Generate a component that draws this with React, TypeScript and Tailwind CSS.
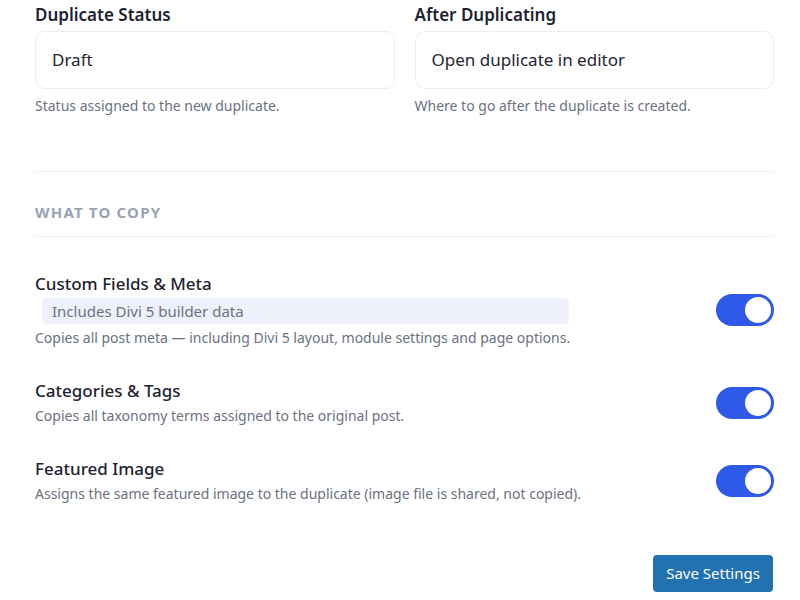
import React, { useState } from 'react';

const font = { fontFamily: '"Noto Sans", "Open Sans", sans-serif' };

type Option = {
  key: string;
  title: string;
  badge?: string;
  help: string;
};

const OPTIONS: Option[] = [
  {
    key: 'meta',
    title: 'Custom Fields & Meta',
    badge: 'Includes Divi 5 builder data',
    help: 'Copies all post meta — including Divi 5 layout, module settings and page options.',
  },
  {
    key: 'terms',
    title: 'Categories & Tags',
    help: 'Copies all taxonomy terms assigned to the original post.',
  },
  {
    key: 'thumb',
    title: 'Featured Image',
    help: 'Assigns the same featured image to the duplicate (image file is shared, not copied).',
  },
];

const Toggle: React.FC<{ on: boolean; onClick: () => void }> = ({ on, onClick }) => (
  <button
    onClick={onClick}
    className={`relative w-[58px] h-[32px] rounded-full shrink-0 transition-colors ${on ? 'bg-[#2f5ae9]' : 'bg-gray-300'}`}
  >
    <span
      className={`absolute top-[3px] w-[26px] h-[26px] rounded-full bg-white transition-all ${on ? 'left-[29px]' : 'left-[3px]'}`}
    />
  </button>
);

const Field: React.FC<{ label: string; value: string; help: string }> = ({ label, value, help }) => (
  <div>
    <div className="text-[17px] leading-6 font-semibold text-[#1d2330]">{label}</div>
    <div className="mt-[4px] h-[58px] border border-[#eceef2] rounded-[10px] flex items-center px-4 text-[17px] text-[#1f2430]">
      {value}
    </div>
    <div className="mt-[7px] text-[14px] leading-5 text-[#6b7280]">{help}</div>
  </div>
);

export default function App() {
  const [enabled, setEnabled] = useState<Record<string, boolean>>({ meta: true, terms: true, thumb: true });

  return (
    <div className="w-[800px] h-[600px] bg-white pl-[35px] pr-[26px] pt-[3px]" style={font}>
      <div className="grid grid-cols-2 gap-5">
        <Field label="Duplicate Status" value="Draft" help="Status assigned to the new duplicate." />
        <Field label="After Duplicating" value="Open duplicate in editor" help="Where to go after the duplicate is created." />
      </div>

      <div className="mt-[55px] border-t border-[#f0f1f4]" />
      <div className="pt-[30px] pb-[13px] text-[15px] leading-[21px] font-bold tracking-[0.08em] text-[#9aa2b4]">WHAT TO COPY</div>
      <div className="border-t border-[#f0f1f4]" />

      <div className="mt-[35px] flex flex-col">
        {OPTIONS.map((opt, i) => (
          <div key={opt.key} className={`flex items-center justify-between ${i === 0 ? '' : i === 1 ? 'mt-[31px]' : 'mt-[31px]'}`}>
            <div>
              <div className="text-[17px] leading-6 font-medium text-[#1d2330]">{opt.title}</div>
              {opt.badge && (
                <div className="mt-[2px] ml-[7px] w-[527px] h-[26px] rounded-[5px] bg-[#eef0fc] flex items-center px-[10px] text-[15px] text-[#6b7280]">
                  {opt.badge}
                </div>
              )}
              <div className={`${opt.badge ? 'mt-[4px]' : 'mt-[3px]'} text-[14px] leading-5 text-[#6b7280]`}>{opt.help}</div>
            </div>
            <Toggle
              on={enabled[opt.key]}
              onClick={() => setEnabled(prev => ({ ...prev, [opt.key]: !prev[opt.key] }))}
            />
          </div>
        ))}
      </div>

      <div className="mt-[51px] flex justify-end pr-px">
        <button className="w-[120px] h-[37px] rounded-[4px] bg-[#2271b1] text-white text-[15px]">
          Save Settings
        </button>
      </div>
    </div>
  );
}
